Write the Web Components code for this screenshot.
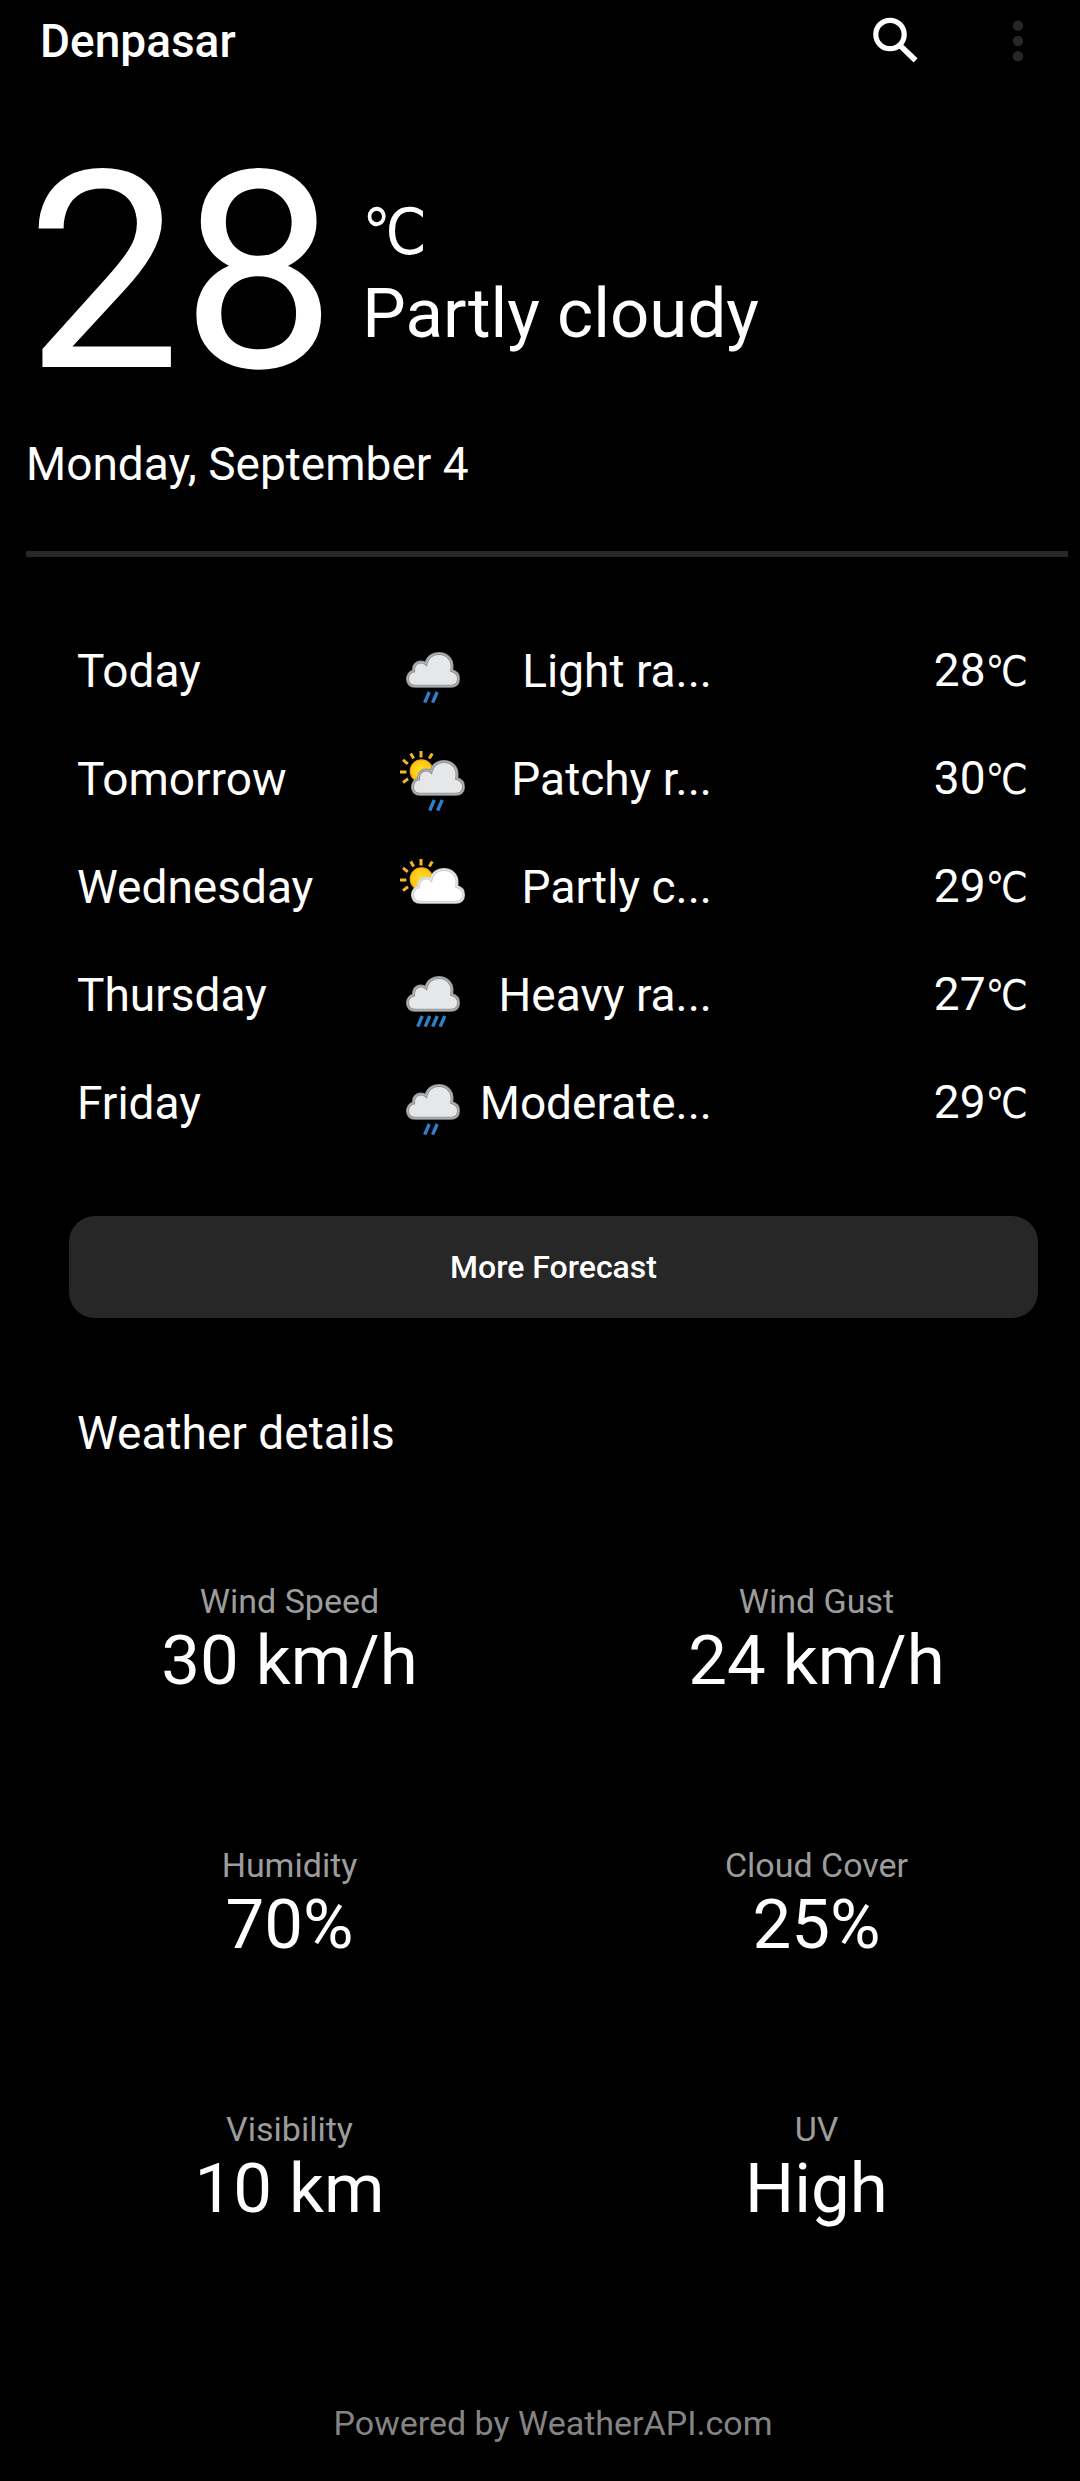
<!DOCTYPE html>
<html lang="en">
<head>
<meta charset="utf-8">
<meta name="viewport" content="width=device-width, initial-scale=1">
<title>Denpasar</title>
<style>
  html { background: #000; }
  body {
    margin: 0;
    background: #000;
    color: #fff;
    font-family: Roboto, sans-serif;
    --muted: #9c9c9c;
    --faint: #848484;
    --surface: #272727;
    --text-s: 34px;
    --text-m: 46px;
    --text-l: 69px;
    --unit-font: "DejaVu Sans Condensed", "DejaVu Sans", sans-serif;
  }
</style>
</head>
<body>
<weather-app>
  <app-header slot="header">Denpasar</app-header>
  <current-weather temperature="28" unit="℃" condition="Partly cloudy">Monday, September 4</current-weather>
  <forecast-table></forecast-table>
  <more-button>More Forecast</more-button>
  <weather-details>
    <span slot="title">Weather details</span>
    <detail-item label="Wind Speed">30 km/h</detail-item>
    <detail-item label="Wind Gust">24 km/h</detail-item>
    <detail-item label="Humidity">70%</detail-item>
    <detail-item label="Cloud Cover">25%</detail-item>
    <detail-item label="Visibility">10 km</detail-item>
    <detail-item label="UV">High</detail-item>
  </weather-details>
  <app-credit>Powered by WeatherAPI.com</app-credit>
</weather-app>

<script>
  const attach = (el, html) => { el.attachShadow({ mode: "open" }).innerHTML = html; };

  class WeatherApp extends HTMLElement {
    connectedCallback() {
      attach(this, `
        <style>
          :host { display: block; }
          main { padding: 0 0 38px 26px; }
        </style>
        <slot name="header"></slot>
        <main><slot></slot></main>`);
    }
  }

  class AppHeader extends HTMLElement {
    connectedCallback() {
      attach(this, `
        <style>
          :host { display: block; }
          header { display: flex; align-items: center; gap: 58px; height: 82px; padding: 0 30px 0 40px; }
          h1 { flex: 1; margin: 0; font-size: var(--text-m); font-weight: 500; line-height: 54px; }
          button { display: block; width: 64px; height: 64px; padding: 0; border: 0; background: none; color: inherit; }
          svg { display: block; width: 64px; height: 64px; }
        </style>
        <header>
          <h1><slot></slot></h1>
          <button type="button" aria-label="Search">
            <svg viewBox="0 0 64 64" fill="none" stroke="#fff">
              <circle cx="26" cy="25.5" r="14.2" stroke-width="5.2"/>
              <path d="M36.8 37.3 L51.6 51.4" stroke-width="5.6"/>
            </svg>
          </button>
          <button type="button" aria-label="More options">
            <svg viewBox="0 0 64 64" fill="#272727">
              <circle cx="32" cy="16.7" r="5.2"/><circle cx="32" cy="32" r="5.2"/><circle cx="32" cy="47.3" r="5.2"/>
            </svg>
          </button>
        </header>`);
    }
  }

  class CurrentWeather extends HTMLElement {
    connectedCallback() {
      const a = n => this.getAttribute(n);
      attach(this, `
        <style>
          :host { display: block; padding-top: 53px; }
          .now { display: flex; align-items: center; gap: 26px; }
          .temp { font-size: 276px; line-height: 276px; }
          .side { display: flex; flex-direction: column; font-size: var(--text-l); line-height: 82px; }
          .unit { font-family: var(--unit-font); font-size: 64px; }
          .date { margin: 26px 0 60px; font-size: var(--text-m); line-height: 54px; }
          hr { height: 6px; margin: 0 12px 0 0; border: 0; background: var(--surface); }
        </style>
        <div class="now">
          <div class="temp">${a("temperature")}</div>
          <div class="side"><span class="unit">${a("unit")}</span><span>${a("condition")}</span></div>
        </div>
        <p class="date"><slot></slot></p>
        <hr>`);
    }
  }

  const CLOUD = "M16 49.2C11 49.2 8.5 46 8.5 42C8.5 38 11 34.8 14.6 34C14 28.5 17.3 25 21.7 25C23.7 25 25.6 25.6 27 26.8C28 20.5 33.5 16.5 40 16.5C47.5 16.5 53 22 53 29C53 30.5 53 32 52.6 33.5C56.5 34.5 59.5 37.5 59.5 42C59.5 46.5 56.5 49.2 52 49.2Z";

  class WeatherIcon extends HTMLElement {
    connectedCallback() {
      const kind = this.getAttribute("kind");
      const sunny = kind === "partly" || kind === "patchy";
      const white = kind === "partly";
      const drops = { light: [30.3, 38.2], patchy: [30.3, 38.2], heavy: [23.3, 30.8, 38.3, 45.8] }[kind] || [];
      const sun = `
        <g stroke="#f5b52b" stroke-width="3">
          <path d="M22 6v6.4M11.7 8.6l3 5M33.3 8.6l-3 5M4 14.8l4.8 4M1 27h6.4M4 37.6l5-3.8"/>
        </g>
        <circle cx="22.5" cy="26" r="11.2" fill="url(#sun)" stroke="#f9a70c" stroke-width="1.2"/>`;
      attach(this, `
        <style>
          :host { display: block; width: 68px; height: 68px; }
          svg { display: block; width: 100%; height: 100%; }
        </style>
        <svg viewBox="0 0 68 68" fill="none" aria-hidden="true">
          <defs>
            <radialGradient id="sun"><stop offset="0" stop-color="#ffe51f"/><stop offset="1" stop-color="#ffc313"/></radialGradient>
          </defs>
          ${sunny ? sun : ""}
          <g transform="translate(${sunny ? 5 : 0} 0)">
            <path d="${CLOUD}" fill="${white ? "#fff" : "#e5e7e9"}" stroke="${white ? "#cfcfcf" : "#8e9092"}" stroke-width="3"/>
            <path d="${CLOUD}" stroke="${white ? "#e6e6e6" : "#b4b6b8"}" stroke-width="1.2"/>
            <path d="${drops.map(x => `M${x} 55L${x - 4.6} 65.6`).join("")}" stroke="#2f7fcb" stroke-width="3.4"/>
          </g>
        </svg>`);
    }
  }

  const DAYS = [
    ["Today", "light", "Light ra...", 28],
    ["Tomorrow", "patchy", "Patchy r...", 30],
    ["Wednesday", "partly", "Partly c...", 29],
    ["Thursday", "heavy", "Heavy ra...", 27],
    ["Friday", "light", "Moderate...", 29]
  ];

  class ForecastTable extends HTMLElement {
    connectedCallback() {
      const rows = DAYS.map(([day, icon, text, temp]) => `
        <tr>
          <th scope="row">${day}</th>
          <td class="icon"><weather-icon kind="${icon}"></weather-icon></td>
          <td class="text">${text}</td>
          <td class="temp">${temp}<span class="unit">℃</span></td>
        </tr>`).join("");
      attach(this, `
        <style>
          :host { display: block; padding: 60px 52px 59px 51px; }
          table { width: 100%; border-collapse: collapse; table-layout: fixed; font-size: var(--text-m); line-height: 54px; }
          th, td { height: 108px; padding: 0; font-weight: 400; text-align: right; vertical-align: middle; white-space: nowrap; }
          th { text-align: left; }
          .icon { width: 68px; }
          .text { width: 245px; }
          .temp { width: 316px; }
          .unit { font-family: var(--unit-font); font-size: 42px; }
        </style>
        <table><tbody>${rows}</tbody></table>`);
    }
  }

  class MoreButton extends HTMLElement {
    connectedCallback() {
      attach(this, `
        <style>
          :host { display: block; padding: 0 42px 0 43px; }
          button {
            display: block; width: 100%; height: 102px; padding: 0; border: 0; border-radius: 26px;
            background: var(--surface); color: inherit; font: 500 32px/40px Roboto, sans-serif;
          }
        </style>
        <button type="button"><slot></slot></button>`);
    }
  }

  class WeatherDetails extends HTMLElement {
    connectedCallback() {
      attach(this, `
        <style>
          :host { display: block; padding-top: 88px; }
          h2 { margin: 0 51px 49px; font-size: var(--text-m); font-weight: 400; line-height: 54px; }
          .grid { display: grid; grid-template-columns: 1fr 1fr; }
        </style>
        <h2><slot name="title"></slot></h2>
        <div class="grid"><slot></slot></div>`);
    }
  }

  class DetailItem extends HTMLElement {
    connectedCallback() {
      attach(this, `
        <style>
          :host { display: block; padding: 72px 0; text-align: center; }
          dl, dd { margin: 0; }
          dt { color: var(--muted); font-size: var(--text-s); line-height: 40px; }
          dd { font-size: var(--text-l); line-height: 80px; }
        </style>
        <dl><dt>${this.getAttribute("label")}</dt><dd><slot></slot></dd></dl>`);
    }
  }

  class AppCredit extends HTMLElement {
    connectedCallback() {
      attach(this, `
        <style>
          :host { display: block; padding-top: 102px; color: var(--faint); font-size: var(--text-s); line-height: 40px; text-align: center; }
        </style>
        <slot></slot>`);
    }
  }

  customElements.define("weather-icon", WeatherIcon);
  customElements.define("app-header", AppHeader);
  customElements.define("current-weather", CurrentWeather);
  customElements.define("forecast-table", ForecastTable);
  customElements.define("more-button", MoreButton);
  customElements.define("detail-item", DetailItem);
  customElements.define("weather-details", WeatherDetails);
  customElements.define("app-credit", AppCredit);
  customElements.define("weather-app", WeatherApp);
</script>
</body>
</html>
